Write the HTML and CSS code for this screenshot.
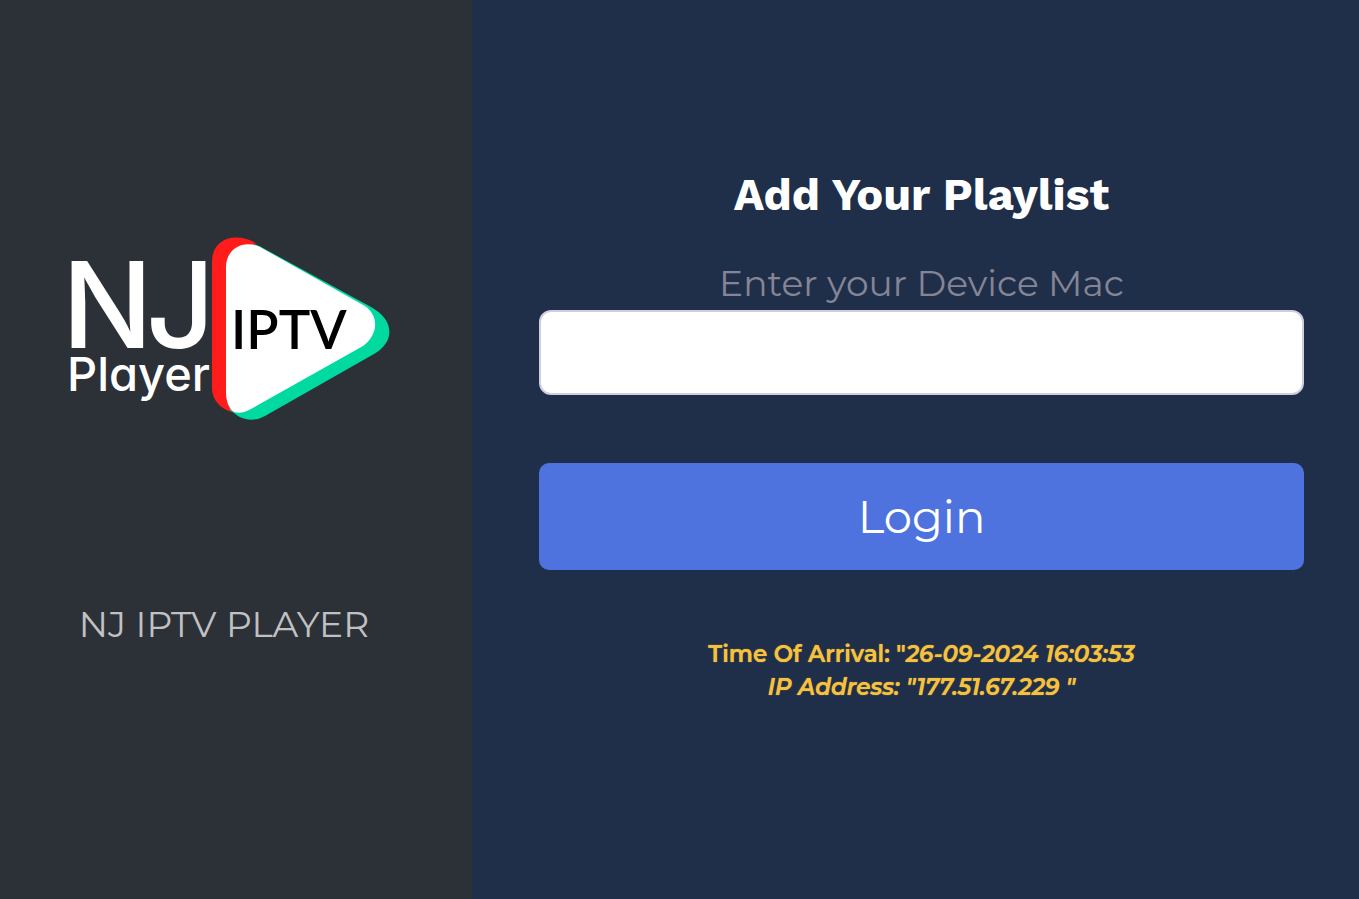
FILE: index.html
```html
<!DOCTYPE html>
<html lang="en">
<head>
<meta charset="utf-8">
<meta name="viewport" content="width=device-width, initial-scale=1">
<title>NJ IPTV Player</title>
<link rel="stylesheet" href="styles.css">
</head>
<body>
<div class="page">
  <aside class="brand">
    <svg class="logo" viewBox="59 236 330 186" role="img" aria-label="NJ Player IPTV">
      <path class="logo-red" d="M212 262 C212 244 225 237.500 236 237.500 C243 237.500 248 239 254 242 L300 300 L240 413 C224 413 212 402 212 388 Z"/>
      <path class="logo-green" d="M238 262 C238 247 249 240 262 247.500 L371 307 C395 320 395 342 374 354 L265 416 C256 421 247 421 238 416 L230 410 Z"/>
      <path class="logo-white" d="M226 267 C226 249 243 239 260 247 L364 305.500 C379 315 379 334 363 346 L251 409 C245 412 240 414 234 412 C228 408 226 400 226 392 Z"/>
      <text class="logo-initials" x="62" y="348">N</text>
      <text class="logo-initials" x="146" y="348">J</text>
      <text class="logo-player" x="67" y="391">Player</text>
      <text class="logo-iptv" x="231" y="349">IPTV</text>
    </svg>
    <p class="brand-name">NJ IPTV PLAYER</p>
  </aside>
  <main class="content">
    <h1 class="title">Add Your Playlist</h1>
    <form class="form">
      <label class="label" for="mac">Enter your Device Mac</label>
      <input class="field" id="mac" name="mac" type="text">
      <button class="submit" type="submit">Login</button>
    </form>
    <p class="info">Time Of Arrival: "<em>26-09-2024 16:03:53<br>IP Address: "177.51.67.229 "</em></p>
  </main>
</div>
</body>
</html>
```
FILE: styles.css
```css
* { box-sizing: border-box; }

body {
  margin: 0;
  background: #1f2f49;
  font-family: Montserrat, Inter, sans-serif;
}

.page {
  display: grid;
  grid-template-columns: 472fr 887fr;
  min-height: 100vh;
}

.brand {
  display: flex;
  flex-direction: column;
  align-items: center;
  padding: 236px 24px 0 0;
  background: #2c3037;
}

.logo { width: 330px; max-width: 100%; overflow: visible; }
.logo-red { fill: #ff1c1a; }
.logo-green { fill: #00d9a0; }
.logo-white { fill: #fff; }
.logo-initials { fill: #fff; font-family: Inter, sans-serif; font-size: 120px; font-weight: 500; }
.logo-player { fill: #fff; font-family: Inter, sans-serif; font-size: 47px; font-weight: 500; font-feature-settings: "cv11"; }
.logo-iptv { fill: #000; font-family: Lato, sans-serif; font-size: 53px; font-weight: 600; }

.brand-name {
  margin: 180px 0 0;
  color: #c0c1c3;
  font-size: 36px;
  font-weight: 400;
  line-height: 44px;
}

.content {
  padding: 168px 55px 0 67px;
  text-align: center;
}

.title {
  margin: 0 0 37px;
  color: #fff;
  font-family: "Work Sans", Inter, sans-serif;
  font-size: 45px;
  font-weight: 700;
  line-height: 54px;
}

.form {
  display: flex;
  flex-direction: column;
}

.label {
  padding-bottom: 3px;
  color: #858595;
  font-size: 36px;
  font-weight: 400;
  line-height: 48px;
}

.field {
  width: 100%;
  height: 85px;
  padding: 0 24px;
  border: 2px solid #cdcee2;
  border-radius: 12px;
  background: #fff;
  font: inherit;
  font-size: 36px;
}

.submit {
  margin-top: 68px;
  height: 107px;
  border: 0;
  border-radius: 10px;
  background: #4e73df;
  color: #fff;
  font-family: inherit;
  font-size: 45px;
  font-weight: 400;
}

.info {
  margin: 68px 0 0;
  color: #f6c23e;
  font-size: 23px;
  font-weight: 600;
  line-height: 33px;
  text-shadow: 0 0 1px #f6c23e;
}
```
